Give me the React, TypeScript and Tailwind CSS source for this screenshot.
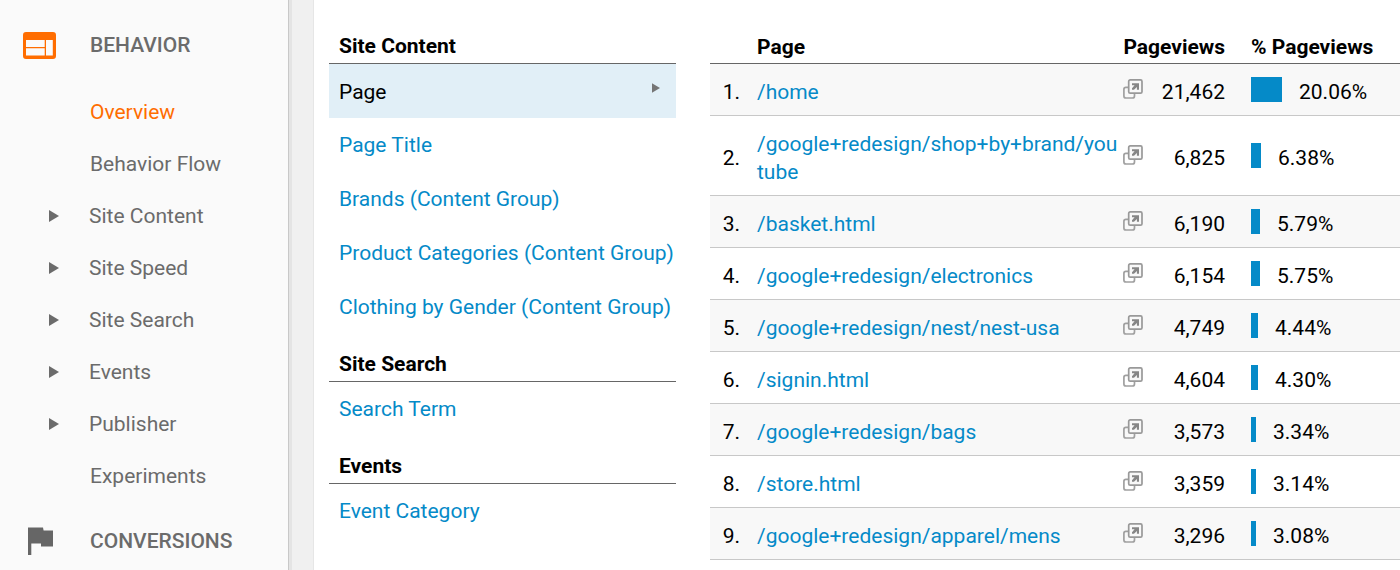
type NavItem = { label: string; expandable?: boolean; active?: boolean };

const navItems: NavItem[] = [
  { label: "Overview", active: true },
  { label: "Behavior Flow" },
  { label: "Site Content", expandable: true },
  { label: "Site Speed", expandable: true },
  { label: "Site Search", expandable: true },
  { label: "Events", expandable: true },
  { label: "Publisher", expandable: true },
  { label: "Experiments" },
];

const sections = [
  {
    title: "Site Content",
    selected: "Page",
    items: [
      "Page Title",
      "Brands (Content Group)",
      "Product Categories (Content Group)",
      "Clothing by Gender (Content Group)",
    ],
  },
  { title: "Site Search", items: ["Search Term"] },
  { title: "Events", items: ["Event Category"] },
];

const rows = [
  { page: "/home", views: "21,462", percent: 20.06 },
  { page: "/google+redesign/shop+by+brand/youtube", views: "6,825", percent: 6.38 },
  { page: "/basket.html", views: "6,190", percent: 5.79 },
  { page: "/google+redesign/electronics", views: "6,154", percent: 5.75 },
  { page: "/google+redesign/nest/nest-usa", views: "4,749", percent: 4.44 },
  { page: "/signin.html", views: "4,604", percent: 4.3 },
  { page: "/google+redesign/bags", views: "3,573", percent: 3.34 },
  { page: "/store.html", views: "3,359", percent: 3.14 },
  { page: "/google+redesign/apparel/mens", views: "3,296", percent: 3.08 },
];

function Triangle({ className }: { className: string }) {
  return (
    <svg viewBox="0 0 10 12" className={className} fill="currentColor" aria-hidden="true">
      <path d="M0 0 10 6 0 12Z" />
    </svg>
  );
}

function BehaviorIcon() {
  return (
    <svg viewBox="0 0 33 27" className="h-[27px] w-[33px] text-[#ff6d00]" aria-hidden="true">
      <path
        fill="currentColor"
        fillRule="evenodd"
        d="M3 0H30A3 3 0 0 1 33 3V24A3 3 0 0 1 30 27H3A3 3 0 0 1 0 24V3A3 3 0 0 1 3 0ZM3 8V15H21.7V8ZM3 16.3V23.5H21.7V16.3ZM23 8V23.5H29.8V8Z"
      />
    </svg>
  );
}

function FlagIcon() {
  return (
    <svg viewBox="0 0 25 28" className="h-7 w-[25px] text-[#666]" aria-hidden="true">
      <path fill="currentColor" d="M0 0.500H15L15.600 3.500H25V19.500H13V16.500H3.300V28H0Z" />
    </svg>
  );
}

function OpenPageIcon() {
  return (
    <svg viewBox="0 0 20 20" className="size-5" fill="none" aria-hidden="true">
      <rect x="0.900" y="8.400" width="10.600" height="10.600" rx="2" stroke="#a0a0a0" strokeWidth="1.700" />
      <rect x="5.700" y="0.900" width="13.300" height="13.300" rx="1.500" fill="#f8f8f8" stroke="#999" strokeWidth="1.700" />
      <path d="M9 4.300H16V10.800H13.900V8.100L11 10.800H9V9.300L11.600 6.200H9Z" fill="#868686" />
    </svg>
  );
}

function Sidebar() {
  return (
    <aside className="w-[288px] shrink-0 bg-[#fafafa] pt-[19px] text-[#6b6b6b]">
      <a href="#behavior" className="flex h-[52px] items-center pl-[23px] font-medium">
        <span className="flex w-[67px]">
          <BehaviorIcon />
        </span>
        BEHAVIOR
      </a>
      <nav aria-label="Behavior" className="pt-[15px]">
        <ul>
          {navItems.map((item) => (
            <li key={item.label}>
              <a
                href="#report"
                className={
                  item.active
                    ? "flex h-[52px] items-center pl-[49px] text-[#ff6d00]"
                    : "flex h-[52px] items-center pl-[49px]"
                }
              >
                <span className={item.expandable ? "w-10" : "w-[41px]"}>
                  {item.expandable && <Triangle className="h-3 w-2.5" />}
                </span>
                {item.label}
              </a>
            </li>
          ))}
        </ul>
      </nav>
      <a href="#conversions" className="mt-[13px] flex h-[52px] items-center pl-7 font-medium">
        <span className="flex w-[62px]">
          <FlagIcon />
        </span>
        CONVERSIONS
      </a>
    </aside>
  );
}

function Dimensions() {
  return (
    <div className="w-[347px] shrink-0">
      {sections.map((section) => (
        <section key={section.title} className="mb-[15px]">
          <h2 className="border-b border-[#666] pb-0.5 pl-2.5 leading-[30px] font-bold">
            {section.title}
          </h2>
          <ul>
            {section.selected && (
              <li>
                <a
                  href="#page"
                  aria-current="true"
                  className="flex h-[54px] items-center justify-between bg-[#e1eff7] pt-0.5 pr-4 pl-2.5"
                >
                  {section.selected}
                  <Triangle className="mb-2 h-3 w-2 text-[#757575]" />
                </a>
              </li>
            )}
            {section.items.map((item) => (
              <li key={item}>
                <a href="#dimension" className="flex h-[54px] items-center pl-2.5 whitespace-nowrap text-[#058ac8]">
                  {item}
                </a>
              </li>
            ))}
          </ul>
        </section>
      ))}
    </div>
  );
}

function PageTable() {
  return (
    <table className="w-full table-fixed border-collapse">
      <colgroup>
        <col className="w-[47px]" />
        <col />
        <col className="w-[25px]" />
        <col className="w-[77px]" />
        <col className="w-[175px]" />
      </colgroup>
      <thead>
        <tr className="h-8 border-b border-[#666] text-left">
          <td />
          <th scope="col" className="p-0 font-bold">
            Page
          </th>
          <th scope="col" colSpan={2} className="p-0 text-right font-bold">
            Pageviews
          </th>
          <th scope="col" className="p-0 pl-[26px] font-bold">
            % Pageviews
          </th>
        </tr>
      </thead>
      <tbody>
        {rows.map((row, index) => (
          <tr key={row.page} className="border-b border-[#c8c8c8] odd:bg-[#f8f8f8]">
            <td className="pt-1.5 pr-[17px] text-right">{index + 1}.</td>
            <td className="pt-[14px] pb-[9px] leading-7 break-all">
              <a href="#page" className="text-[#058ac8]">
                {row.page}
              </a>
            </td>
            <td className="p-0">
              <a href="#open" aria-label="Open page" className="flex">
                <OpenPageIcon />
              </a>
            </td>
            <td className="pt-1.5 text-right">{row.views}</td>
            <td className="pl-[26px]">
              <div className="flex items-center gap-[17px]">
                <span className="h-[25px] bg-[#058ac8]" style={{ width: Math.round(row.percent * 1.57) }} />
                <span className="pt-1.5">{row.percent.toFixed(2)}%</span>
              </div>
            </td>
          </tr>
        ))}
      </tbody>
    </table>
  );
}

export default function App() {
  return (
    <div className="flex min-h-screen bg-[#f0f0f0] font-[Roboto,sans-serif] text-[21px] leading-7 text-black">
      <Sidebar />
      <div className="w-[26px] shrink-0 border-r border-l border-r-[#e6e6e6] border-l-[#c8c8c8]">
        <div className="h-full w-[3px] bg-[#e4e4e4]" />
      </div>
      <main className="flex min-w-0 flex-1 items-start bg-white pt-[31px] pl-[15px]">
        <Dimensions />
        <div className="min-w-0 flex-1 pl-[34px]">
          <PageTable />
        </div>
      </main>
    </div>
  );
}
